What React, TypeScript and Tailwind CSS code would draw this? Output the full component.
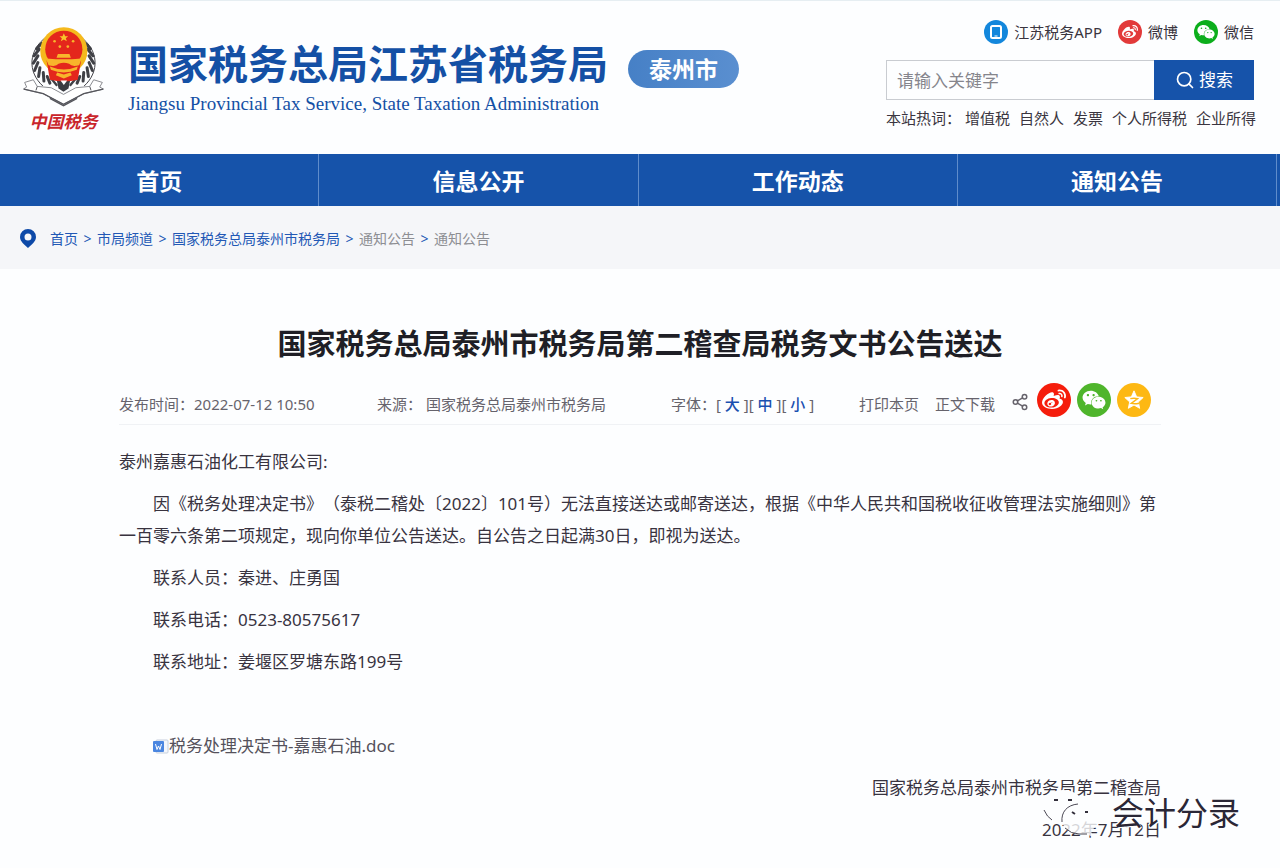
import clsx from "clsx";
import { Search, Share2 } from "lucide-react";
import type { ReactNode } from "react";
import { FaWeibo, FaWeixin } from "react-icons/fa";

const navItems = ["首页", "信息公开", "工作动态", "通知公告"];
const hotWords = ["增值税", "自然人", "发票", "个人所得税", "企业所得"];
const crumbs = [
  { label: "首页", muted: false },
  { label: "市局频道", muted: false },
  { label: "国家税务总局泰州市税务局", muted: false },
  { label: "通知公告", muted: true },
  { label: "通知公告", muted: true },
];
const contacts = [
  "联系人员：秦进、庄勇国",
  "联系电话：0523-80575617",
  "联系地址：姜堰区罗塘东路199号",
];

const Emblem = () => (
  <svg viewBox="20 25 250 250" className="h-[83px] w-[83px]" aria-hidden="true">
    {/* wheat ears */}
    <g fill="none" stroke="#3f4046" strokeLinecap="round">
      <path d="M92 62C40 100 35 165 82 208" strokeWidth="3" />
      <path d="M198 62C250 100 255 165 208 208" strokeWidth="3" />
      <path
        d="M80 80l-16 16M72 98l-16 20M68 118l-14 22M68 138l-10 24M74 154l-4 26M84 168l2 26M96 180l8 20"
        strokeWidth="9"
      />
      <path
        d="M210 80l16 16M218 98l16 20M222 118l14 22M222 138l10 24M216 154l4 26M206 168l-2 26M194 180l-8 20"
        strokeWidth="9"
      />
      <path d="M108 186l16 20M182 186l-16 20" strokeWidth="7" />
    </g>
    <path d="M124 188h42l-6 28-15 10-15-10z" fill="#3b3c42" />
    {/* national emblem */}
    <circle cx="146" cy="103" r="71" fill="#f5b91d" />
    <path d="M94 132h104l-10 58q-42 10-84 0z" fill="#e4261c" />
    <circle cx="146" cy="98" r="56" fill="#e4261c" />
    <path d="M146 50l4 9h9l-7 6 3 9-9-5-9 5 3-9-7-6h9z" fill="#f8c52b" />
    <g fill="#f8b52b">
      <circle cx="118" cy="74" r="4" />
      <circle cx="174" cy="74" r="4" />
      <circle cx="134" cy="90" r="4" />
      <circle cx="158" cy="90" r="4" />
      <path d="M128 112h35l4 12h-43z" />
      <path d="M92 126l30 2h48l30-2-8 20q-22 6-30-4-16-6-32 0-8 10-30 4z" />
      <path d="M104 150q42 18 84 0l-3 10q-39 16-78 0z" />
      <path d="M126 168l20 6 20-6 4 8-24 10-24-10z" />
    </g>
    <path d="M136 192h20l-10 14z" fill="#fff" />
    {/* ribbon */}
    <path
      d="M28 198l26-8 12 20 42 4 37 20 37-20 42-4 12-20 26 8-8 14 12 6-60 14-61 32-61-32-60-14 10-6z"
      fill="#fff"
      stroke="#8a8b90"
      strokeWidth="3"
      strokeLinejoin="round"
    />
    <path
      d="M26 218l58 14 61 32 61-32 58-14"
      fill="none"
      stroke="#55565c"
      strokeWidth="4"
    />
    <path d="M66 210l-4 12M224 210l4 12" stroke="#55565c" strokeWidth="3" />
    <path d="M104 246l41 22 41-22" fill="none" stroke="#55565c" strokeWidth="4" />
  </svg>
);

type BadgeProps = {
  className: string;
  children: ReactNode;
};

const Badge = ({ className, children }: BadgeProps) => (
  <span
    className={clsx(
      "flex shrink-0 items-center justify-center rounded-full text-white",
      className,
    )}
  >
    {children}
  </span>
);

const PhoneIcon = () => (
  <svg viewBox="0 0 24 24" className="size-6" fill="none" aria-hidden="true">
    <rect x="7" y="6" width="10" height="12" rx="1.5" stroke="#fff" strokeWidth="2" />
    <path d="M10.500 16h3" stroke="#fff" />
  </svg>
);

const PinIcon = () => (
  <svg viewBox="0 0 16 19" className="mr-3.5 h-[19px] w-4" aria-hidden="true">
    <path
      d="M8 0a8 8 0 0 0-8 8c0 4.500 4.500 7.500 8 11 3.500-3.500 8-6.500 8-11a8 8 0 0 0-8-8zm0 4.500a3.500 3.500 0 1 1 0 7 3.500 3.500 0 0 1 0-7z"
      fill="#0d49a8"
    />
  </svg>
);

const QzoneIcon = () => (
  <svg viewBox="0 0 24 24" className="size-[22px]" aria-hidden="true">
    <path
      d="M12 2l2.9 6.6 7.1.7-5.3 4.8 1.5 7L12 17.5 5.800 21.100l1.500-7L2 9.300l7.100-.7z"
      fill="#fff"
      stroke="#fff"
      strokeLinejoin="round"
    />
    <path
      d="M8 10.500q4-1 8 0l-7 5.200q4 .9 8.500-.2"
      fill="none"
      stroke="#fdb813"
      strokeWidth="1.600"
    />
  </svg>
);

const DocIcon = () => (
  <svg viewBox="0 0 16 16" className="size-4 shrink-0" aria-hidden="true">
    <rect x="3" y="2" width="12" height="13" rx="1" fill="#f4f7fc" stroke="#c6cfdd" />
    <rect x="0" y="3" width="11" height="11" rx="1" fill="#4b86e0" />
    <path d="M2.500 6l1.500 5.500L5.500 8 7 11.500 8.500 6" fill="none" stroke="#fff" />
  </svg>
);

const Header = () => (
  <header className="flex items-start justify-between border-t border-[#e6eef2] pr-[26px] pb-[18px] pl-[22px]">
    <div className="flex">
      <div className="flex w-[83px] flex-col items-center pt-6">
        <Emblem />
        <span className="text-[17px] leading-7 font-bold whitespace-nowrap text-[#c9252b] italic">
          中国税务
        </span>
      </div>
      <div className="ml-[23px] pt-[39px] text-[#1450a5]">
        <div className="flex items-end gap-5">
          <h1 className="text-[40px] leading-[48px] font-bold whitespace-nowrap">
            国家税务总局江苏省税务局
          </h1>
          <span className="rounded-full bg-linear-to-r from-[#4680c6] to-[#5a8fd0] px-[21px] text-[23px] leading-[38px] font-bold whitespace-nowrap text-white">
            泰州市
          </span>
        </div>
        <p className="mt-1 font-['Liberation_Serif',serif] text-[19px] leading-6 whitespace-nowrap">
          Jiangsu Provincial Tax Service, State Taxation Administration
        </p>
      </div>
    </div>
    <div className="w-[368px] shrink-0 pt-[19px] text-[15px] whitespace-nowrap text-[#3a3540]">
      <div className="flex justify-end gap-4 leading-6">
        <a href="#app" className="flex items-center gap-1.5">
          <Badge className="size-6 bg-[#1387dc]">
            <PhoneIcon />
          </Badge>
          江苏税务APP
        </a>
        <a href="#weibo" className="flex items-center gap-1.5">
          <Badge className="size-6 bg-[#e23a3a]">
            <FaWeibo className="size-4" />
          </Badge>
          微博
        </a>
        <a href="#weixin" className="flex items-center gap-1.5">
          <Badge className="size-6 bg-[#0cae1c]">
            <FaWeixin className="size-[18px]" />
          </Badge>
          微信
        </a>
      </div>
      <form className="mt-4 flex h-10" onSubmit={(e) => e.preventDefault()}>
        <input
          type="text"
          aria-label="请输入关键字"
          placeholder="请输入关键字"
          className="min-w-0 flex-1 border border-r-0 border-[#c9ccd1] px-2.5 pt-0.5 text-[17px] outline-none placeholder:text-[#85858c]"
        />
        <button
          type="submit"
          className="flex w-[100px] items-center justify-center gap-1 bg-[#1653aa] text-[17px] text-white"
        >
          <Search className="size-5" />
          搜索
        </button>
      </form>
      <div className="mt-2 flex leading-5">
        <span>本站热词：</span>
        <ul className="ml-1 flex gap-[9px]">
          {hotWords.map((word) => (
            <li key={word}>
              <a href="#search">{word}</a>
            </li>
          ))}
        </ul>
      </div>
    </div>
  </header>
);

const Breadcrumb = () => (
  <nav className="flex h-[63px] items-center bg-[#f5f6f9] pt-0.5 pl-5 text-[14px] text-[#2258b5]">
    <PinIcon />
    <ol className="flex">
      {crumbs.map((crumb, i) => (
        <li key={i} className="flex">
          {i > 0 && <span className="w-[19px] text-center">&gt;</span>}
          <a href="#channel" className={clsx(crumb.muted && "text-[#8d8e93]")}>
            {crumb.label}
          </a>
        </li>
      ))}
    </ol>
  </nav>
);

const ArticleMeta = () => (
  <div className="grid grid-cols-[258px_294px_188px_1fr] items-center border-b border-[#f0f2f5] pt-[3px] pb-[7px] text-[15px] leading-5 whitespace-nowrap text-[#66636c]">
    <span className="pt-2">发布时间：2022-07-12 10:50</span>
    <span className="pt-2">来源： 国家税务总局泰州市税务局</span>
    <span className="pt-2">
      字体：[ <button className="font-medium text-[#1a50b0]">大</button> ][{" "}
      <button className="font-medium text-[#1a50b0]">中</button> ][{" "}
      <button className="font-medium text-[#1a50b0]">小</button> ]
    </span>
    <div className="flex items-center justify-between pr-2.5">
      <div className="flex gap-4 pt-2">
        <button>打印本页</button>
        <button>正文下载</button>
      </div>
      <div className="flex items-center gap-1.5">
        <Share2 className="mt-1 mr-0.5 size-[18px]" />
        <a href="#share-weibo" aria-label="微博">
          <Badge className="size-[34px] bg-[#f51d0c]">
            <FaWeibo className="size-6" />
          </Badge>
        </a>
        <a href="#share-weixin" aria-label="微信">
          <Badge className="size-[34px] bg-[#4fb52c]">
            <FaWeixin className="size-6" />
          </Badge>
        </a>
        <a href="#share-qzone" aria-label="QQ空间">
          <Badge className="size-[34px] bg-[#fdb813]">
            <QzoneIcon />
          </Badge>
        </a>
      </div>
    </div>
  </div>
);

const Watermark = () => (
  <div className="pointer-events-none absolute right-10 bottom-[30px] flex items-center gap-3">
    <svg viewBox="0 0 58 50" className="h-[50px] w-[58px]" aria-hidden="true">
      <path
        d="M21 2C9 2 1 9 1 18c0 6 3 10 8 13l-2 7 8-4h6c12 0 20-7 20-16S33 2 21 2z"
        fill="#fdfeff"
      />
      <path d="M2 22q3 7 8 10" fill="none" stroke="#4b4854" />
      <path
        d="M38 16c-10 0-18 6-18 15s8 15 18 15h6l7 3-2-6c4-3 7-7 7-12 0-9-8-15-18-15z"
        fill="#fdfeff"
        fillOpacity="0.800"
      />
      <path d="M20 34c-1-10 5-17 16-18M23 40q6 6 14 6h8" fill="none" stroke="#4b4854" />
      <path d="M12 12h4M26 12h4M30 24l3 2M43 24h3" stroke="#33303c" strokeWidth="2" />
    </svg>
    <span className="text-[32px] leading-10 whitespace-nowrap text-[#2b2736] [text-shadow:-1px_-1px_0_#fff,1px_1px_0_#fff]">
      会计分录
    </span>
  </div>
);

const App = () => {
  return (
    <div className="relative min-h-screen bg-[#fdfeff] font-['Noto_Sans','Noto_Sans_CJK_SC',sans-serif] [text-spacing-trim:space-all]">
      <Header />
      <nav className="grid grid-cols-4 bg-[#1653aa] pr-[3px]">
        {navItems.map((item) => (
          <a
            key={item}
            href="#nav"
            className="border-r border-[#5f8ccb] pt-0.5 text-center text-[23px] leading-[50px] font-bold text-white"
          >
            {item}
          </a>
        ))}
      </nav>
      <Breadcrumb />
      <main className="px-[119px] pt-[55px] pb-5">
        <h2 className="mb-4 text-center text-[29px] leading-10 font-bold text-[#1f1f26]">
          国家税务总局泰州市税务局第二稽查局税务文书公告送达
        </h2>
        <ArticleMeta />
        <article className="mt-[21px] flex flex-col gap-2.5 text-[17px] leading-8 text-[#38333f]">
          <p>泰州嘉惠石油化工有限公司:</p>
          <p className="indent-[2em]">
            因《税务处理决定书》（泰税二稽处〔2022〕101号）无法直接送达或邮寄送达，根据《中华人民共和国税收征收管理法实施细则》第一百零六条第二项规定，现向你单位公告送达。自公告之日起满30日，即视为送达。
          </p>
          {contacts.map((line) => (
            <p key={line} className="indent-[2em]">
              {line}
            </p>
          ))}
          <a
            href="#attachment"
            className="mt-[42px] flex items-center self-start pl-[2em] text-[#55525c]"
          >
            <DocIcon />
            税务处理决定书-嘉惠石油.doc
          </a>
          <p className="text-right">国家税务总局泰州市税务局第二稽查局</p>
          <p className="text-right">2022年7月12日</p>
        </article>
      </main>
      <Watermark />
    </div>
  );
};

export default App;
